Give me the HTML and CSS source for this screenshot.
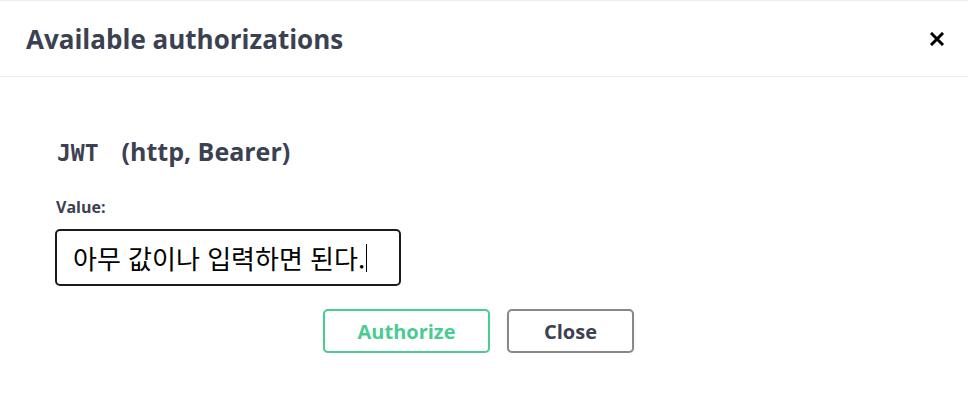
FILE: index.html
```html
<!DOCTYPE html>
<html lang="ko">
<head>
<meta charset="utf-8">
<link rel="stylesheet" href="styles.css">
</head>
<body>
<div class="modal">
  <div class="modal-header">
    <h3 class="modal-title">Available authorizations</h3>
    <button class="close-x" aria-label="close">
      <svg width="14" height="14" viewBox="0 0 14 14"><path d="M2 2 L12 12 M12 2 L2 12" stroke="#000" stroke-width="3" stroke-linecap="square"/></svg>
    </button>
  </div>
  <div class="modal-body">
    <h4 class="scheme"><code>JWT</code>(http, Bearer)</h4>
    <label class="label">Value:</label>
    <div class="input">아무 값이나 입력하면 된다.<span class="caret"></span></div>
    <div class="actions">
      <button class="btn authorize">Authorize</button>
      <button class="btn close">Close</button>
    </div>
  </div>
</div>
</body>
</html>
```
FILE: styles.css
```css
html, body { margin: 0; padding: 0; background: #fff; }
body { font-family: "Open Sans", "Noto Sans", sans-serif; color: #3b4151; }
.modal { border-top: 1px solid #ececec; }
.modal-header {
  height: 75px;
  border-bottom: 1px solid #ebebeb;
  display: flex;
  align-items: center;
  justify-content: space-between;
  padding: 0 24px 0 26px;
}
.modal-title { margin: 0; font-size: 26px; font-weight: 700; color: #3b4151; letter-spacing: 0; }
.close-x { background: none; border: 0; padding: 0; width: 14px; height: 14px; display: flex; }
.modal-body { padding: 57px 0 0 55px; }
.scheme { margin: 0 0 0 2px; font-size: 25px; font-weight: 700; line-height: 34px; color: #3b4151; }
.scheme code { font-family: "DejaVu Sans Mono", monospace; font-size: 23px; font-weight: 700; margin-right: 23px; }
.label { display: block; margin: 26px 0 0 1px; font-size: 16px; font-weight: 700; line-height: 22px; }
.input {
  margin-top: 11px;
  width: 346px;
  height: 57px;
  box-sizing: border-box;
  border: 2px solid #1b1b1b;
  border-radius: 5px;
  padding: 0 0 0 16px;
  display: flex;
  align-items: center;
  font-family: "Noto Sans CJK KR", sans-serif;
  font-size: 26px;
  color: #000;
}
.caret { display: inline-block; width: 1px; height: 28px; background: #000; margin-left: 1px; }
.actions { display: flex; justify-content: center; gap: 17px; width: 847px; margin-top: 23px; }
.btn {
  height: 44px;
  border-radius: 5px;
  background: #fff;
  font-family: "Open Sans", "Noto Sans", sans-serif;
  font-size: 20px;
  font-weight: 700;
  box-shadow: 0 1px 2px rgba(0,0,0,.1);
}
.authorize { width: 167px; border: 2px solid #49cc90; color: #49cc90; }
.close { width: 127px; border: 2px solid #888; color: #3b4151; }
```
